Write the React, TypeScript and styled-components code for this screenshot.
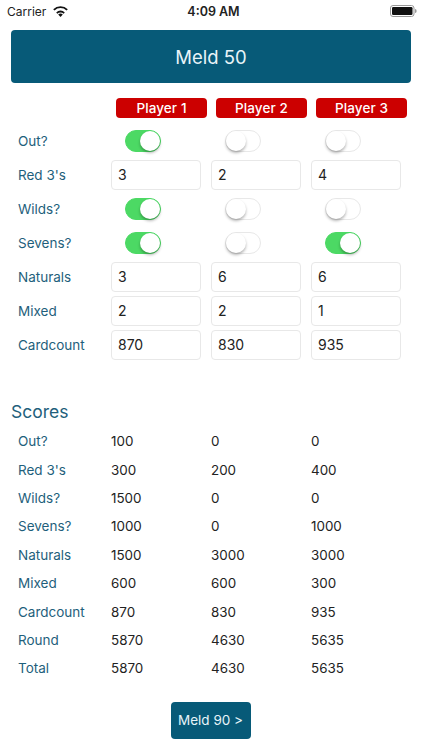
import React from "react";
import styled, { createGlobalStyle } from "styled-components";

const Global = createGlobalStyle`
  html, body { margin: 0; padding: 0; background: #fff; }
  body { font-family: Inter, "Liberation Sans", sans-serif; width: 422px; height: 750px; overflow: hidden; }
`;
const Page = styled.div`display: flex; flex-direction: column; width: 422px; height: 750px; box-sizing: border-box;`;
const StatusBar = styled.div`
  display: grid; grid-template-columns: 1fr auto 1fr; align-items: center; height: 22px;
  padding: 0 5px 0 7px; color: #222; font-size: 12px;
`;
const StatusLeft = styled.div`display: flex; align-items: center; gap: 7px;`;
const Time = styled.div`font-weight: 600; font-size: 12.5px; margin-left: 3px;`;
const StatusRight = styled.div`display: flex; justify-content: flex-end;`;
const Banner = styled.div`
  margin: 8px 11px 0; height: 53px; background: #075a78; border-radius: 4px; color: #e8f4f8;
  display: flex; align-items: center; justify-content: center; font-size: 18.5px;
`;
const Grid = styled.div`
  display: grid; grid-template-columns: 93px repeat(3, 100px); margin-left: 18px;
`;
const Badges = styled(Grid)`margin-top: 15px; margin-bottom: 8px;`;
const Badge = styled.div`
  width: 91px; height: 20px; margin-left: 5px; border-radius: 4px; background: #cc0000; color: #fff;
  font-size: 13.5px; font-weight: 500; letter-spacing: .1px; display: flex; align-items: center; justify-content: center;
`;
const FormRow = styled(Grid)`height: 30px; margin-bottom: 4px; align-items: center;`;
const Label = styled.div`font-size: 13.5px; color: #1f5f7c;`;
const Input = styled.div`
  width: 90px; height: 30px; box-sizing: border-box; border: 1px solid #e8e8e8; border-radius: 4px;
  padding: 0 6px 2px; display: flex; align-items: center; font-size: 14px; color: #222;
`;
const Track = styled.div<{ $on: boolean }>`
  position: relative; width: 36px; height: 22px; box-sizing: border-box; margin-left: 14px; border-radius: 11px;
  background: ${p => (p.$on ? "#4cd964" : "#fff")}; border: 1px solid ${p => (p.$on ? "#4cd964" : "#e8e8e8")};
`;
const Knob = styled.div<{ $on: boolean }>`
  position: absolute; top: 0; left: ${p => (p.$on ? "14px" : "0")}; width: 20px; height: 20px; border-radius: 50%;
  background: #fff; box-shadow: 0 2px 3px rgba(0,0,0,.3);
`;
const Heading = styled.div`margin: 37px 0 0 11px; height: 22px; line-height: 22px; font-size: 17.5px; color: #1f5f7c;`;
const ScoreList = styled.div`display: flex; flex-direction: column; margin-top: 4px;`;
const ScoreRow = styled(Grid)`height: 28.4px; align-items: center;`;
const Value = styled.div`font-size: 13.4px; color: #222;`;
const Footer = styled.div`display: flex; justify-content: center; margin-top: 19px;`;
const NextButton = styled.div`
  width: 80px; height: 37px; background: #075a78; border-radius: 4px; color: #e8f4f8; font-size: 13.5px;
  padding-right: 1px; box-sizing: border-box;
  display: flex; align-items: center; justify-content: center;
`;

const Wifi = () => (
  <svg width="15" height="11" viewBox="0 0 15 11" aria-hidden="true">
    <path d="M7.5 11 5.2 8.5a3.3 3.3 0 0 1 4.6 0Z" fill="#111" />
    <path d="M3.2 6.4a6 6 0 0 1 8.6 0l-1.2 1.3a4.3 4.3 0 0 0-6.2 0Z" fill="#111" />
    <path d="M.2 3.2a10.4 10.4 0 0 1 14.6 0l-1.3 1.4a8.5 8.5 0 0 0-12 0Z" fill="#111" />
  </svg>
);
const Battery = () => (
  <svg width="27" height="12" viewBox="0 0 27 12" aria-hidden="true">
    <rect x=".5" y=".5" width="23.5" height="11" rx="2.5" fill="none" stroke="#999" />
    <rect x="2" y="2" width="20.5" height="8" rx="1.2" fill="#111" />
    <path d="M25 4v4c1 0 1.6-.9 1.6-2S26 4 25 4Z" fill="#999" />
  </svg>
);
const Switch = ({ on }: { on: boolean }) => (
  <Track $on={on}><Knob $on={on} /></Track>
);

type Row = { label: string; sw?: boolean[]; val?: string[] };
const form: Row[] = [
  { label: "Out?", sw: [true, false, false] },
  { label: "Red 3's", val: ["3", "2", "4"] },
  { label: "Wilds?", sw: [true, false, false] },
  { label: "Sevens?", sw: [true, false, true] },
  { label: "Naturals", val: ["3", "6", "6"] },
  { label: "Mixed", val: ["2", "2", "1"] },
  { label: "Cardcount", val: ["870", "830", "935"] },
];
const scores: [string, string, string, string][] = [
  ["Out?", "100", "0", "0"],
  ["Red 3's", "300", "200", "400"],
  ["Wilds?", "1500", "0", "0"],
  ["Sevens?", "1000", "0", "1000"],
  ["Naturals", "1500", "3000", "3000"],
  ["Mixed", "600", "600", "300"],
  ["Cardcount", "870", "830", "935"],
  ["Round", "5870", "4630", "5635"],
  ["Total", "5870", "4630", "5635"],
];

export default function App() {
  return (
    <Page>
      <Global />
      <StatusBar>
        <StatusLeft>Carrier <Wifi /></StatusLeft>
        <Time>4:09 AM</Time>
        <StatusRight><Battery /></StatusRight>
      </StatusBar>
      <Banner>Meld 50</Banner>
      <Badges>
        <span />
        <Badge>Player 1</Badge>
        <Badge>Player 2</Badge>
        <Badge>Player 3</Badge>
      </Badges>
      {form.map(r => (
        <FormRow key={r.label}>
          <Label>{r.label}</Label>
          {r.sw ? r.sw.map((on, i) => <Switch key={i} on={on} />) : r.val!.map((v, i) => <Input key={i}>{v}</Input>)}
        </FormRow>
      ))}
      <Heading>Scores</Heading>
      <ScoreList>
        {scores.map(([l, a, b, c]) => (
          <ScoreRow key={l}>
            <Label>{l}</Label>
            <Value>{a}</Value>
            <Value>{b}</Value>
            <Value>{c}</Value>
          </ScoreRow>
        ))}
      </ScoreList>
      <Footer><NextButton>Meld 90 &gt;</NextButton></Footer>
    </Page>
  );
}
